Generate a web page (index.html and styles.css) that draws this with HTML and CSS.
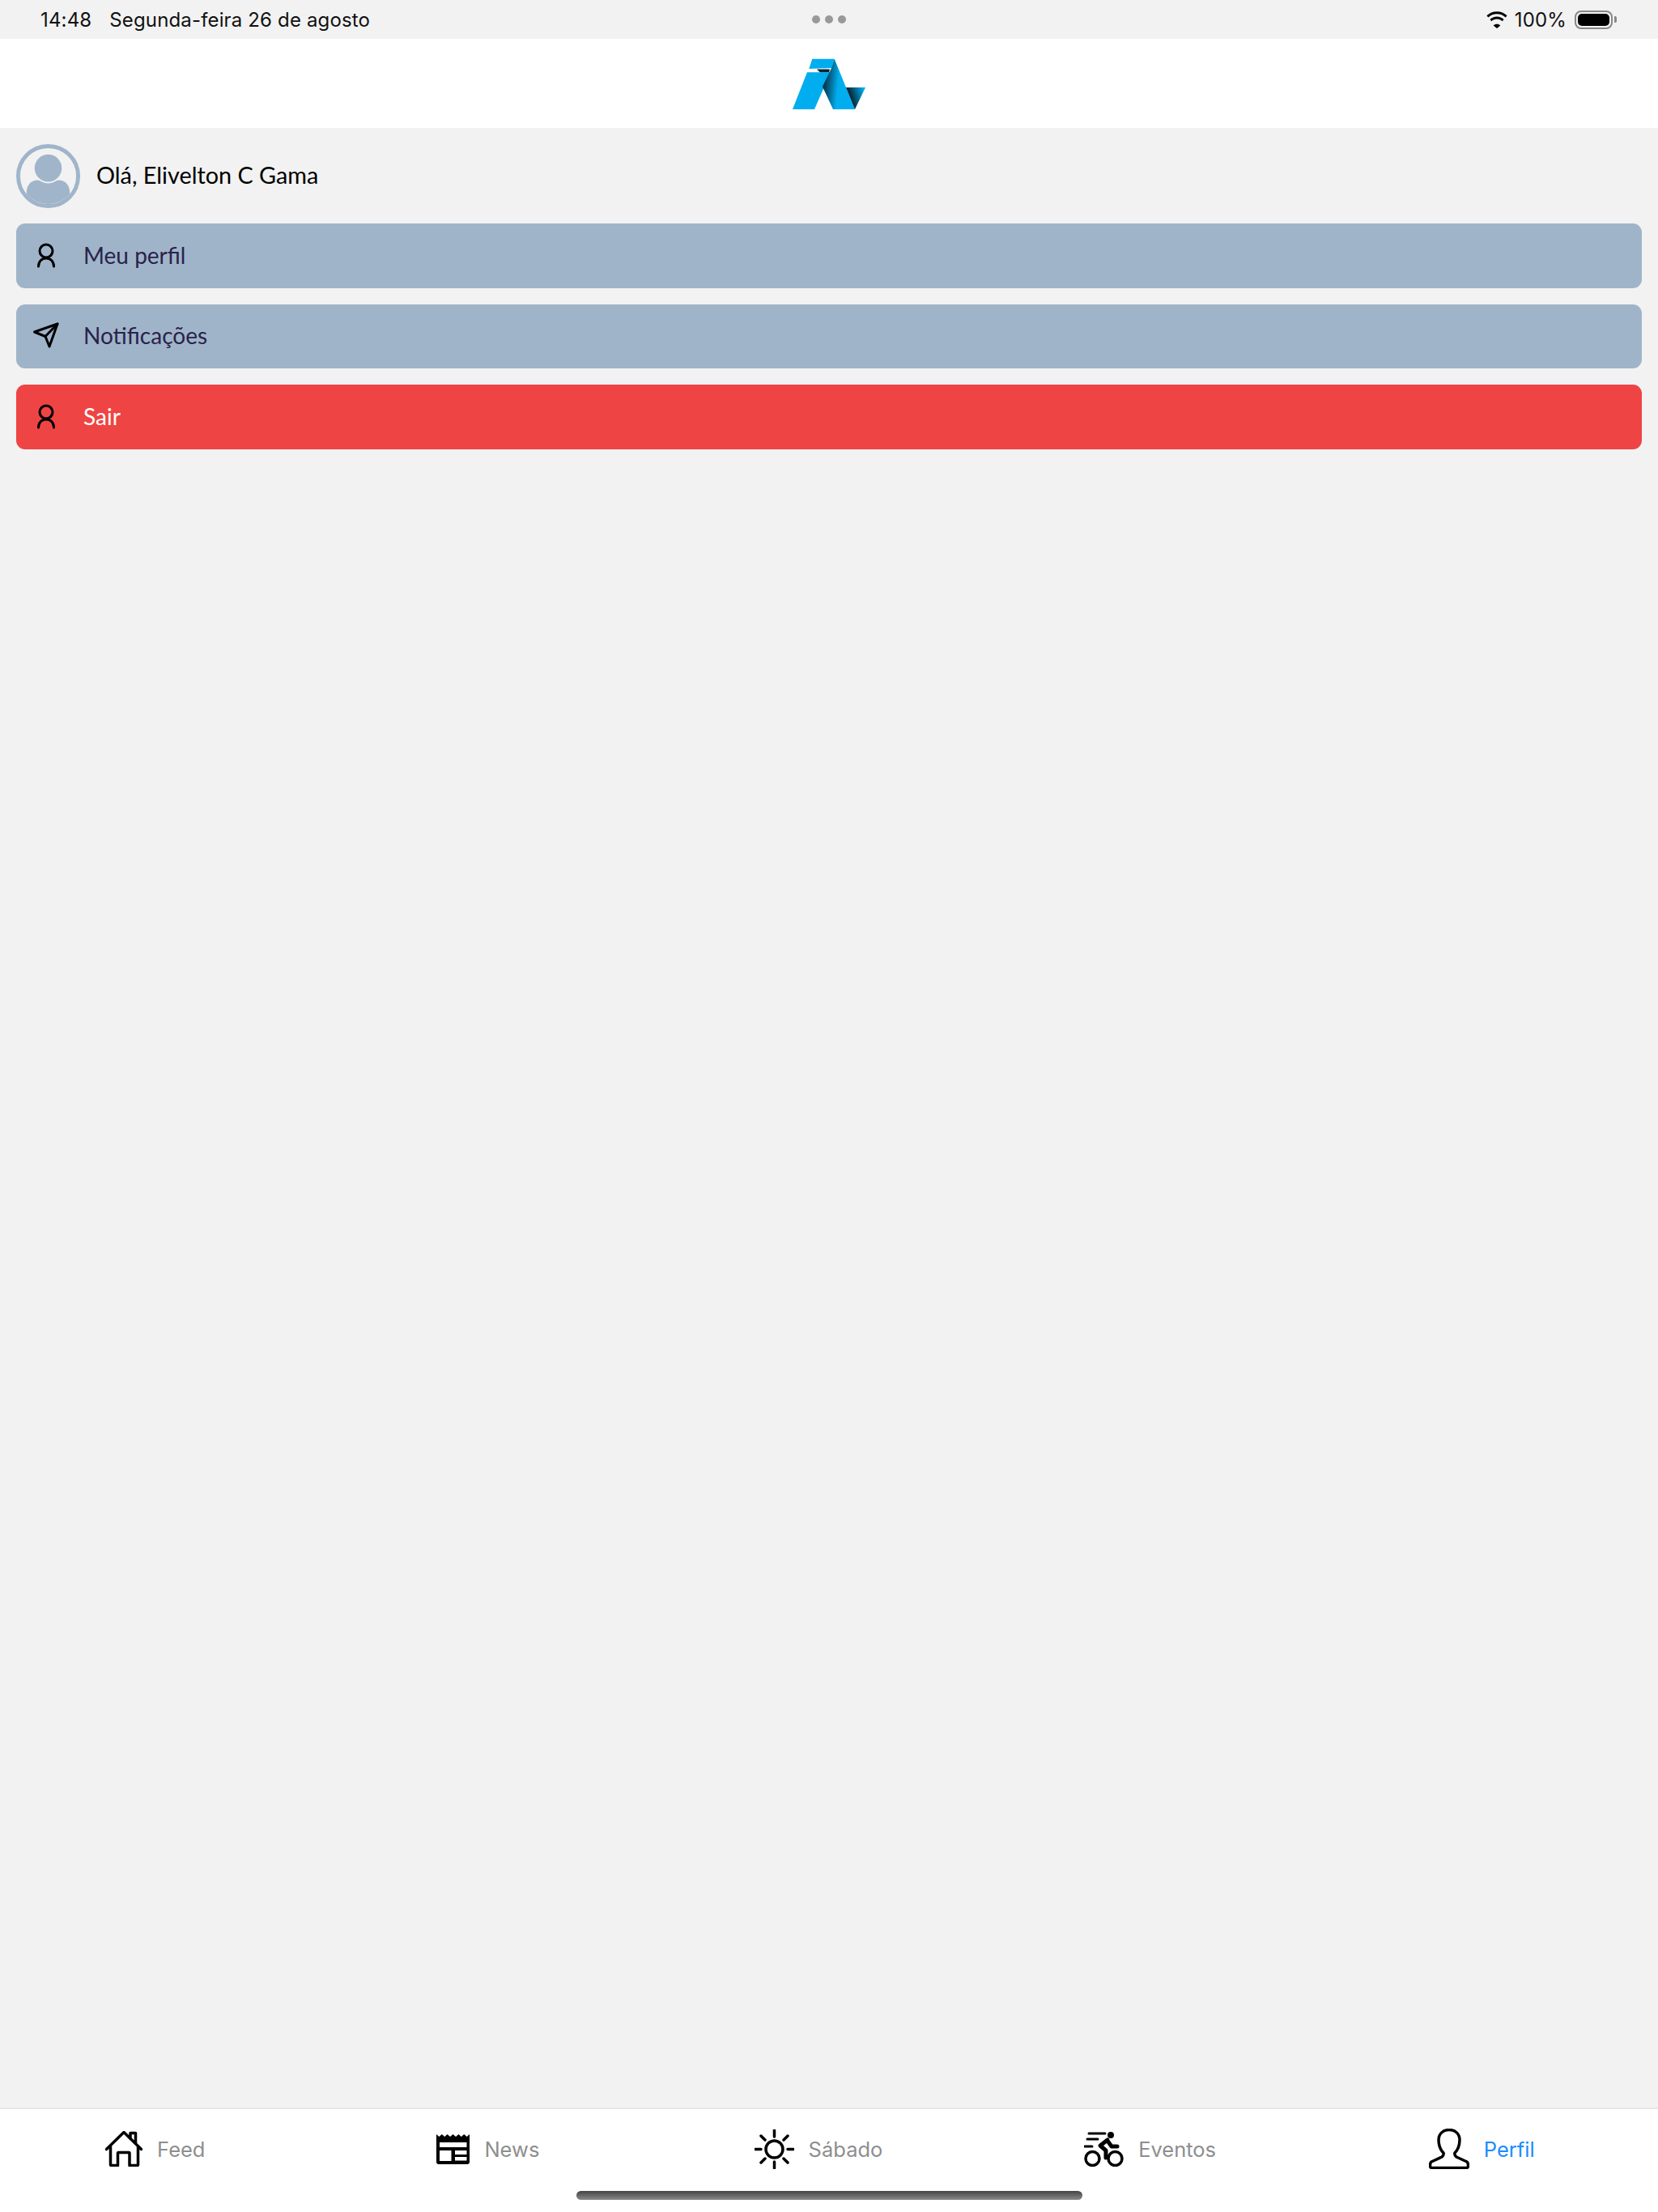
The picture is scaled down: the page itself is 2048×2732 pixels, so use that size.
FILE: index.html
```html
<!DOCTYPE html>
<html lang="pt-BR">
<head>
<meta charset="utf-8">
<title>Perfil</title>
<link rel="stylesheet" href="styles.css">
</head>
<body>
<div class="app">
  <div class="status">
    <div class="status-left"><span>14:48</span><span>Segunda-feira 26 de agosto</span></div>
    <div class="dots"><i></i><i></i><i></i></div>
    <div class="status-right">
      <svg class="wifi" viewBox="0 0 28 21"><path d="M14 3.2c4.1 0 7.800 1.600 10.700 4.200l1.900-2.100C23.300 2.100 18.900.2 14 .2S4.700 2.100 1.400 5.300l1.900 2.100C6.200 4.800 9.900 3.200 14 3.200zM14 9.600c2.500 0 4.900 1 6.600 2.600l2-2.100C20.300 7.800 17.300 6.500 14 6.500s-6.300 1.300-8.600 3.600l2 2.100c1.700-1.600 4.100-2.600 6.600-2.600zM14 15.700c-1.700 0-3.200.7-4.300 1.700l4.300 3.600 4.300-3.600c-1.100-1-2.600-1.700-4.300-1.700z"/></svg>
      <span>100%</span>
      <div class="battery"><div class="battery-fill"></div></div>
      <div class="battery-nub"></div>
    </div>
  </div>
  <header class="top">
    <svg class="logo" viewBox="0 0 90 64">
      <defs>
        <linearGradient id="fold" x1="0" y1="0" x2="1" y2="0.15"><stop offset="0.05" stop-color="#05202e"/><stop offset="0.55" stop-color="#00aeef"/></linearGradient>
        <linearGradient id="tail" x1="1" y1="0" x2="0" y2="0.35"><stop offset="0.1" stop-color="#00aeef"/><stop offset="0.85" stop-color="#04222f"/></linearGradient>
      </defs>
      <path class="logo-blue" d="M24.300.7H51.700L48.300 12 20.300 13z"/>
      <path class="logo-dark" d="M30 13.500H46L45 17.500H34z"/>
      <path class="logo-blue" d="M18 17.300H47L27 63H0z"/>
      <path fill="url(#fold)" d="M51.700.7 77 63H50L37 35 48 12z"/>
      <path fill="url(#tail)" d="M66 36H90L77 63z"/>
    </svg>
  </header>
  <main class="content">
    <div class="greeting">
      <svg class="avatar" viewBox="0 0 80 80">
        <defs><clipPath id="avatar-clip"><circle cx="40" cy="40" r="35"/></clipPath></defs>
        <circle class="avatar-ring" cx="40" cy="40" r="37.500"/>
        <circle class="avatar-fill" cx="40" cy="30" r="17"/>
        <path class="avatar-fill" clip-path="url(#avatar-clip)" d="M13 80V60c0-8 5-15 14-15 3 0 6 4 13 4s10-4 13-4c9 0 14 7 14 15v20z"/>
      </svg>
      <span class="greeting-text">Olá, Elivelton C Gama</span>
    </div>
    <nav class="menu">
      <a class="item">
        <svg class="item-icon" viewBox="0 0 36 36"><circle cx="18" cy="12" r="8"/><path d="M8.500 31c0-6 4-10 9.500-10s9.500 4 9.500 10"/></svg>
        <span>Meu perfil</span>
      </a>
      <a class="item">
        <svg class="item-icon" viewBox="0 0 36 36"><path d="M32 3 3.500 13 17 18.500 22 31z"/><path d="M32 3 17 18.500"/></svg>
        <span>Notificações</span>
      </a>
      <a class="item item-danger">
        <svg class="item-icon" viewBox="0 0 36 36"><circle cx="18" cy="12" r="8"/><path d="M8.500 31c0-6 4-10 9.500-10s9.500 4 9.500 10"/></svg>
        <span>Sair</span>
      </a>
    </nav>
  </main>
  <footer class="tabs">
    <a class="tab">
      <svg class="tab-home" viewBox="0 0 46 44"><path d="M1.500 22.500 23 1.500l21.500 21M6.500 18.500V41.500a1 1 0 0 0 1 1H15.500V27.500a1 1 0 0 1 1-1H29a1 1 0 0 1 1 1V42.500h9.500a1 1 0 0 0 1-1V18.500M31 9.500V2.500h6.500V15.500"/></svg>
      <span>Feed</span>
    </a>
    <a class="tab">
      <svg class="tab-news" viewBox="0 0 41 37">
        <path d="M0 0l3.400 3L6.800 0l3.400 3L13.600 0 17 3l3.500-3L24 3l3.400-3 3.400 3 3.400-3 3.400 3L41 0V34a3 3 0 0 1-3 3H3a3 3 0 0 1-3-3z"/>
        <rect class="cut" x="4" y="10" width="33.500" height="6"/>
        <rect class="cut" x="4" y="20" width="14.500" height="13"/>
        <rect class="cut" x="23" y="20" width="14.500" height="5"/>
        <rect class="cut" x="23" y="28" width="14.500" height="4.500"/>
      </svg>
      <span>News</span>
    </a>
    <a class="tab">
      <svg class="tab-sun" viewBox="0 0 49 49"><circle cx="24.500" cy="24.500" r="10.500"/><path d="M24.500 1v8M24.500 40v8M1 24.500h7M41 24.500h7M8 8l5 5M36 36l5 5M41 8l-5 5M13 36l-5 5"/></svg>
      <span>Sábado</span>
    </a>
    <a class="tab">
      <svg class="tab-bike" viewBox="0 0 49 43">
        <circle class="wheel" cx="10.500" cy="33" r="8.500"/><circle class="wheel" cx="38.500" cy="33" r="8.500"/>
        <circle class="solid" cx="33" cy="4" r="4"/>
        <path class="lines" d="M6 2h20M4 9h13M1 18h9"/>
        <path class="body" d="M29 10 20 17l7 6v9M29 11l5 7h7"/>
      </svg>
      <span>Eventos</span>
    </a>
    <a class="tab tab-active">
      <svg class="tab-user" viewBox="0 0 50 50"><path d="M25 1.500C17 1.500 12 7 12 14c0 8 3 13 6 16 .5 2 0 3.500-2 5L3 41c-1.500 1-1.500 3-1.500 5 0 2 .5 2.500 2.500 2.500h42c2 0 2.500-.5 2.500-2.500 0-2 0-4-1.500-5l-13-6c-2-1.500-2.500-3-2-5 3-3 6-8 6-16 0-7-5-12.500-13-12.500z"/></svg>
      <span>Perfil</span>
    </a>
  </footer>
  <div class="home-bar"></div>
</div>
</body>
</html>
```
FILE: styles.css
```css
* { box-sizing: border-box; }
html, body { margin: 0; padding: 0; }
body { background: #f2f2f2; }
.app { position: relative; width: 2048px; height: 2732px; display: flex; flex-direction: column; overflow: hidden; }

.status { height: 48px; flex: none; display: grid; grid-template-columns: 1fr auto 1fr; align-items: center; padding: 0 50px; font-family: Inter, "Liberation Sans", sans-serif; font-size: 24px; letter-spacing: 0.15px; color: #111; background: #f2f2f2; }
.status-left { display: flex; gap: 22px; }
.dots { display: flex; gap: 6px; }
.dots i { width: 10px; height: 10px; border-radius: 50%; background: #999; }
.status-right { display: flex; align-items: center; justify-content: flex-end; padding-right: 1px; }
.wifi { width: 28px; height: 21px; margin-right: 8px; fill: #000; }
.battery { width: 47px; height: 23px; margin-left: 10px; padding: 2px; border: 2px solid #888; border-radius: 8px; }
.battery-fill { width: 100%; height: 100%; background: #000; border-radius: 5px; }
.battery-nub { width: 3px; height: 8px; margin-left: 2px; background: #888; border-radius: 0 2px 2px 0; }

.top { height: 110px; flex: none; background: #fff; display: flex; justify-content: center; align-items: center; padding-top: 1px; }
.logo { width: 90px; height: 64px; margin-left: -1px; }
.logo-blue { fill: #00aeef; }
.logo-dark { fill: #05202e; }

.content { flex: 1; padding: 20px; display: flex; flex-direction: column; gap: 19px; }
.greeting { display: flex; align-items: center; gap: 20px; font-family: Lato, sans-serif; font-size: 28.800px; color: #000; }
.greeting-text { margin-top: -3px; }
.avatar { width: 79px; height: 79px; flex: none; }
.avatar-ring { fill: none; stroke: #a0b5ca; stroke-width: 5; }
.avatar-fill { fill: #a0b5ca; }

.menu { display: flex; flex-direction: column; gap: 20px; }
.item { height: 79.500px; display: flex; align-items: center; gap: 28px; padding-left: 19px; background: #a0b4c9; border-radius: 11px; font-family: Lato, sans-serif; font-size: 28px; color: #29234a; }
.item span { margin-top: -2px; }
.item-danger { background: #ef4444; color: #fff; }
.item-icon { width: 36px; height: 36px; flex: none; fill: none; stroke: #000; stroke-width: 3; stroke-linejoin: round; stroke-linecap: round; }

.tabs { height: 129px; flex: none; background: #fff; border-top: 2px solid #e6e6e6; display: grid; grid-template-columns: repeat(5, 1fr); align-items: start; font-family: Inter, "Liberation Sans", sans-serif; font-size: 25.500px; color: #8e8e8f; }
.tab { height: 98px; display: flex; align-items: center; justify-content: center; gap: 18px; padding-right: 26px; }
.tab-active { color: #1a8cff; }
.tab svg { flex: none; fill: none; stroke: #000; stroke-width: 3.500; stroke-linejoin: round; stroke-linecap: round; }
.tab-home { width: 46px; height: 44px; }
.tab svg.tab-news { width: 41px; height: 37px; margin-left: 3px; fill: #000; stroke: none; }
.tab-news .cut { fill: #fff; }
.tab-sun { width: 49px; height: 49px; }
.tab-bike { width: 49px; height: 43px; }
.tab-bike .wheel { stroke-width: 3.500; }
.tab-bike .solid { fill: #000; stroke: none; }
.tab-bike .lines { stroke-width: 3; }
.tab-bike .body { stroke-width: 5; }
.tab-user { width: 50px; height: 50px; }

.home-bar { position: absolute; left: 712px; top: 2706px; width: 625px; height: 11px; border-radius: 6px; background: linear-gradient(to bottom, #444, #8a8a8a); }
```
